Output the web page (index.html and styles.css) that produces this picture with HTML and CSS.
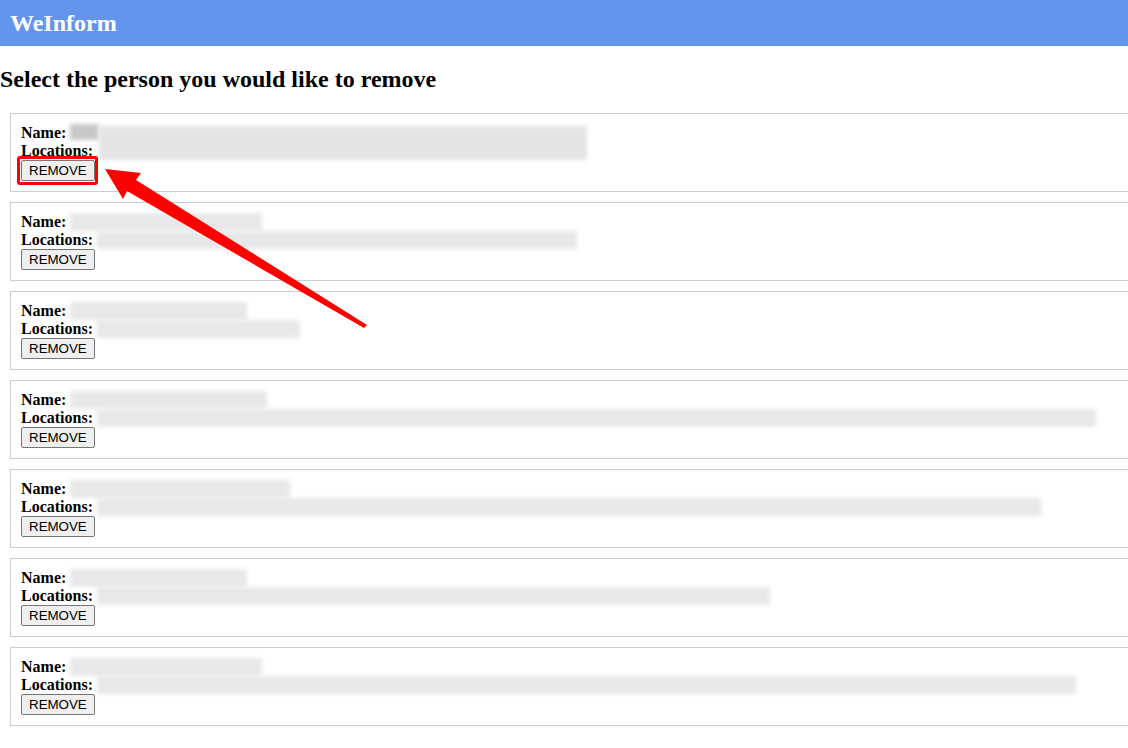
FILE: index.html
```html
<!DOCTYPE html>
<html>
<head>
	<title>WeInform - Remove person</title>
	<meta name="viewport" content="width=device-width, initial-scale=1.0">
	<link rel="stylesheet" href="styles.css">
</head>
<body>
	<div class="header">WeInform</div>
	<h2>Select the person you would like to remove</h2>

	<div class="person">
		<b>Name:</b> <span class="redact dark" style="width:29px"></span><span class="redact tall" style="width:488px"></span><br>
		<b>Locations:</b><br>
		<span class="mark"><button>REMOVE</button></span>
	</div>
	<div class="person">
		<b>Name:</b> <span class="redact" style="width:192px"></span><br>
		<b>Locations:</b> <span class="redact" style="width:480px"></span><br>
		<button>REMOVE</button>
	</div>
	<div class="person">
		<b>Name:</b> <span class="redact" style="width:177px"></span><br>
		<b>Locations:</b> <span class="redact" style="width:203px"></span><br>
		<button>REMOVE</button>
	</div>
	<div class="person">
		<b>Name:</b> <span class="redact" style="width:197px"></span><br>
		<b>Locations:</b> <span class="redact" style="width:999px"></span><br>
		<button>REMOVE</button>
	</div>
	<div class="person">
		<b>Name:</b> <span class="redact" style="width:220px"></span><br>
		<b>Locations:</b> <span class="redact" style="width:944px"></span><br>
		<button>REMOVE</button>
	</div>
	<div class="person">
		<b>Name:</b> <span class="redact" style="width:177px"></span><br>
		<b>Locations:</b> <span class="redact" style="width:673px"></span><br>
		<button>REMOVE</button>
	</div>
	<div class="person">
		<b>Name:</b> <span class="redact" style="width:192px"></span><br>
		<b>Locations:</b> <span class="redact" style="width:979px"></span><br>
		<button>REMOVE</button>
	</div>

	<svg class="arrow" width="400" height="340" viewBox="0 0 400 340">
		<polygon fill="#ff0000" points="105,169 141,173 136,180 367,325 364,328 127,191 123,199"/>
	</svg>
</body>
</html>
```

FILE: styles.css
```css
		html {
			overflow-x: hidden;
		}
		body {
			margin: 0;
			font-family: "Liberation Serif", "Times New Roman", serif;
			font-size: 16px;
			color: black;
			background-color: white;
		}
		.header {
			background-color: #6495ed;
			color: white;
			font-weight: bold;
			font-size: 24px;
			line-height: 26px;
			padding: 10px;
		}
		h2 {
			font-size: 24px;
			margin: 20px 0;
		}
		.person {
			border: 1px solid #cccccc;
			margin: 10px -10px 10px 10px;
			padding: 10px;
			line-height: 18px;
		}
		.redact {
			display: inline-block;
			height: 18px;
			vertical-align: top;
			background-color: #e8e8e8;
			filter: blur(2px);
		}
		.redact.dark {
			height: 16px;
			background-color: #c8c8c8;
		}
		.redact.tall {
			height: 34px;
			margin-top: 2px;
			margin-bottom: -18px;
			background-color: #e4e4e4;
		}
		button {
			font-family: "Liberation Sans", Arial, sans-serif;
			font-size: 13.33px;
			height: 21px;
			padding: 1px 7px;
			background-color: #efefef;
			border: 1px solid #767676;
			border-radius: 2px;
			color: black;
			vertical-align: top;
		}
		.mark {
			display: inline-block;
			position: relative;
		}
		.mark::after {
			content: "";
			position: absolute;
			left: -4px;
			top: -4px;
			right: -3px;
			bottom: -4px;
			border: 3px solid #ff0000;
			border-radius: 3px;
		}
		.arrow {
			position: absolute;
			left: 0;
			top: 0;
		}
```
